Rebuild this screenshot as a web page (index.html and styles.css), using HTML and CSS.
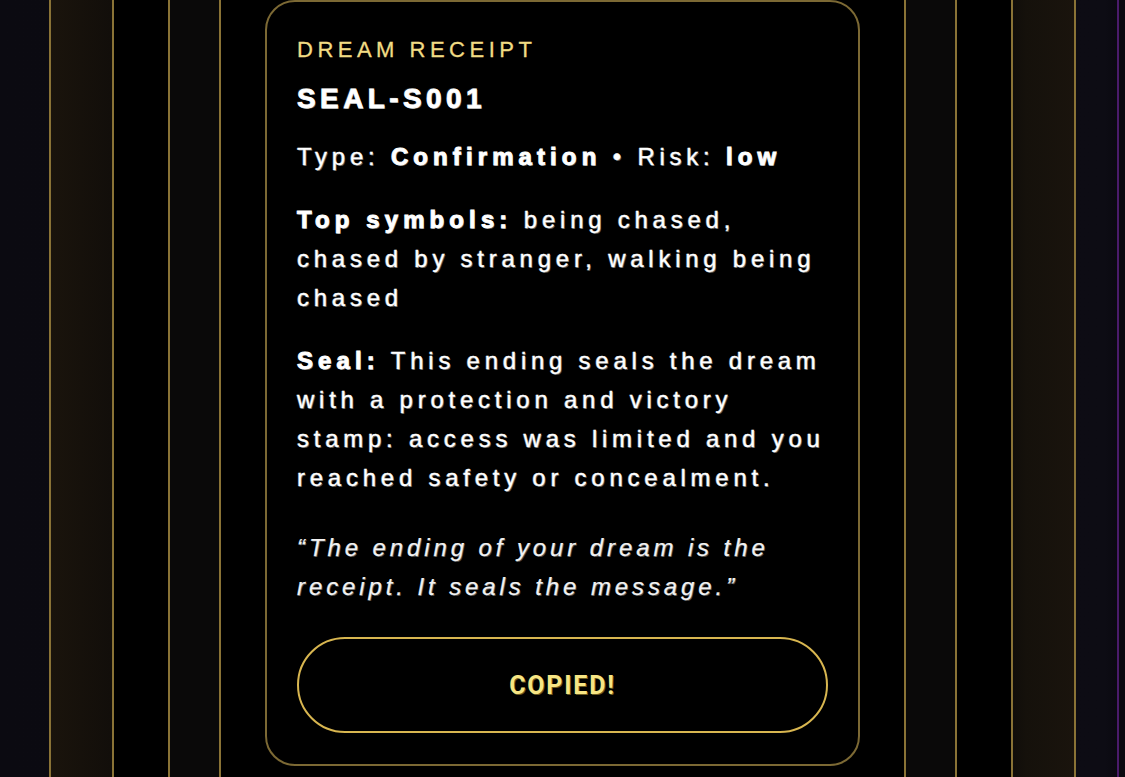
FILE: index.html
```html
<!DOCTYPE html>
<html lang="en">
<head>
<meta charset="utf-8">
<title>Dream Receipt</title>
<link rel="stylesheet" href="styles.css">
</head>
<body>
<div class="frame f1">
  <div class="frame f2">
    <div class="frame f3">
      <div class="frame f4">
        <section class="card">
          <div class="eyebrow">DREAM RECEIPT</div>
          <h1 class="code">SEAL-S001</h1>
          <p class="line">Type: <b>Confirmation</b> • Risk: <b>low</b></p>
          <p class="line"><b>Top symbols:</b> being chased, chased by stranger, walking being chased</p>
          <p class="line"><b>Seal:</b> This ending seals the dream with a protection and victory stamp: access was limited and you reached safety or concealment.</p>
          <p class="quote">“The ending of your dream is the receipt. It seals the message.”</p>
          <button class="copy" type="button">COPIED!</button>
        </section>
      </div>
    </div>
  </div>
</div>
</body>
</html>
```
FILE: styles.css
```css
html, body {
  margin: 0;
  padding: 0;
}
body {
  width: 1125px;
  height: 777px;
  overflow: hidden;
  background: linear-gradient(90deg, #0b0a11 0, #0d0c14 1105px, #0a0910 1117px, #4a1b6a 1117px, #4a1b6a 1119px, #0b0a10 1119px);
  font-family: "Liberation Sans", Arial, sans-serif;
  display: flex;
}
.frame {
  display: flex;
  box-sizing: border-box;
  border-left: 2px solid #8a7336;
  border-right: 2px solid #8a7336;
}
.f1 {
  margin: 0 49px;
  width: 1027px;
  height: 777px;
  padding: 0 61px;
  background: linear-gradient(90deg, #1a140c 0, #120e0a 60px, #0c0a08 70px, #0c0a09 950px, #15110b 975px, #1a140d 1025px);
}
.f2 {
  flex: 1;
  padding: 0 54px;
  background: #000;
}
.f3 {
  flex: 1;
  padding: 0 49px;
  background: #0a0909;
}
.f4 {
  flex: 1;
  display: block;
  padding: 0 44px;
  background: #000;
}
.card {
  box-sizing: border-box;
  background: #000;
  border: 2px solid #7c6934;
  border-radius: 30px;
  padding: 34px 30px 31px;
  color: #fff;
}
.eyebrow {
  font-size: 22px;
  line-height: 28px;
  letter-spacing: 4.5px;
  color: #f1dc84;
  -webkit-text-stroke: 0.3px #f1dc84;
}
.code {
  margin: 18px 0 0;
  font-size: 28px;
  line-height: 34px;
  font-weight: 700;
  letter-spacing: 4.4px;
  color: #fff;
  -webkit-text-stroke: 0.8px #fff;
  text-shadow: 1px 1px 0 #5a5a5a, -1px -1px 0 #2a2a2a;
}
.line {
  margin: 24px 0 0;
  font-size: 24px;
  line-height: 39px;
  letter-spacing: 4.75px;
  color: #fff;
  -webkit-text-stroke: 0.35px #fff;
  text-shadow: 1px 1px 0 #555, -1px 0 0 #2a2a2a;
}
.code + .line {
  margin-top: 21px;
}
.line b {
  font-weight: 700;
  letter-spacing: 5.1px;
  -webkit-text-stroke: 0.9px #fff;
}
.quote {
  margin: 31px 0 0;
  font-size: 24px;
  line-height: 39px;
  font-style: italic;
  letter-spacing: 3.9px;
  color: #f2f2f2;
  -webkit-text-stroke: 0.25px #f2f2f2;
  text-shadow: 1px 1px 0 #4a4a4a;
}
.copy {
  display: block;
  width: 100%;
  height: 96px;
  margin-top: 31px;
  border: 2px solid #d8b650;
  border-radius: 48px;
  background: #000;
  color: #f7e584;
  font-family: Roboto, "Liberation Sans", sans-serif;
  font-weight: 700;
  font-size: 25px;
  letter-spacing: 1.8px;
  text-shadow: 1px 1px 0 #6b5a20;
  cursor: pointer;
}
```
